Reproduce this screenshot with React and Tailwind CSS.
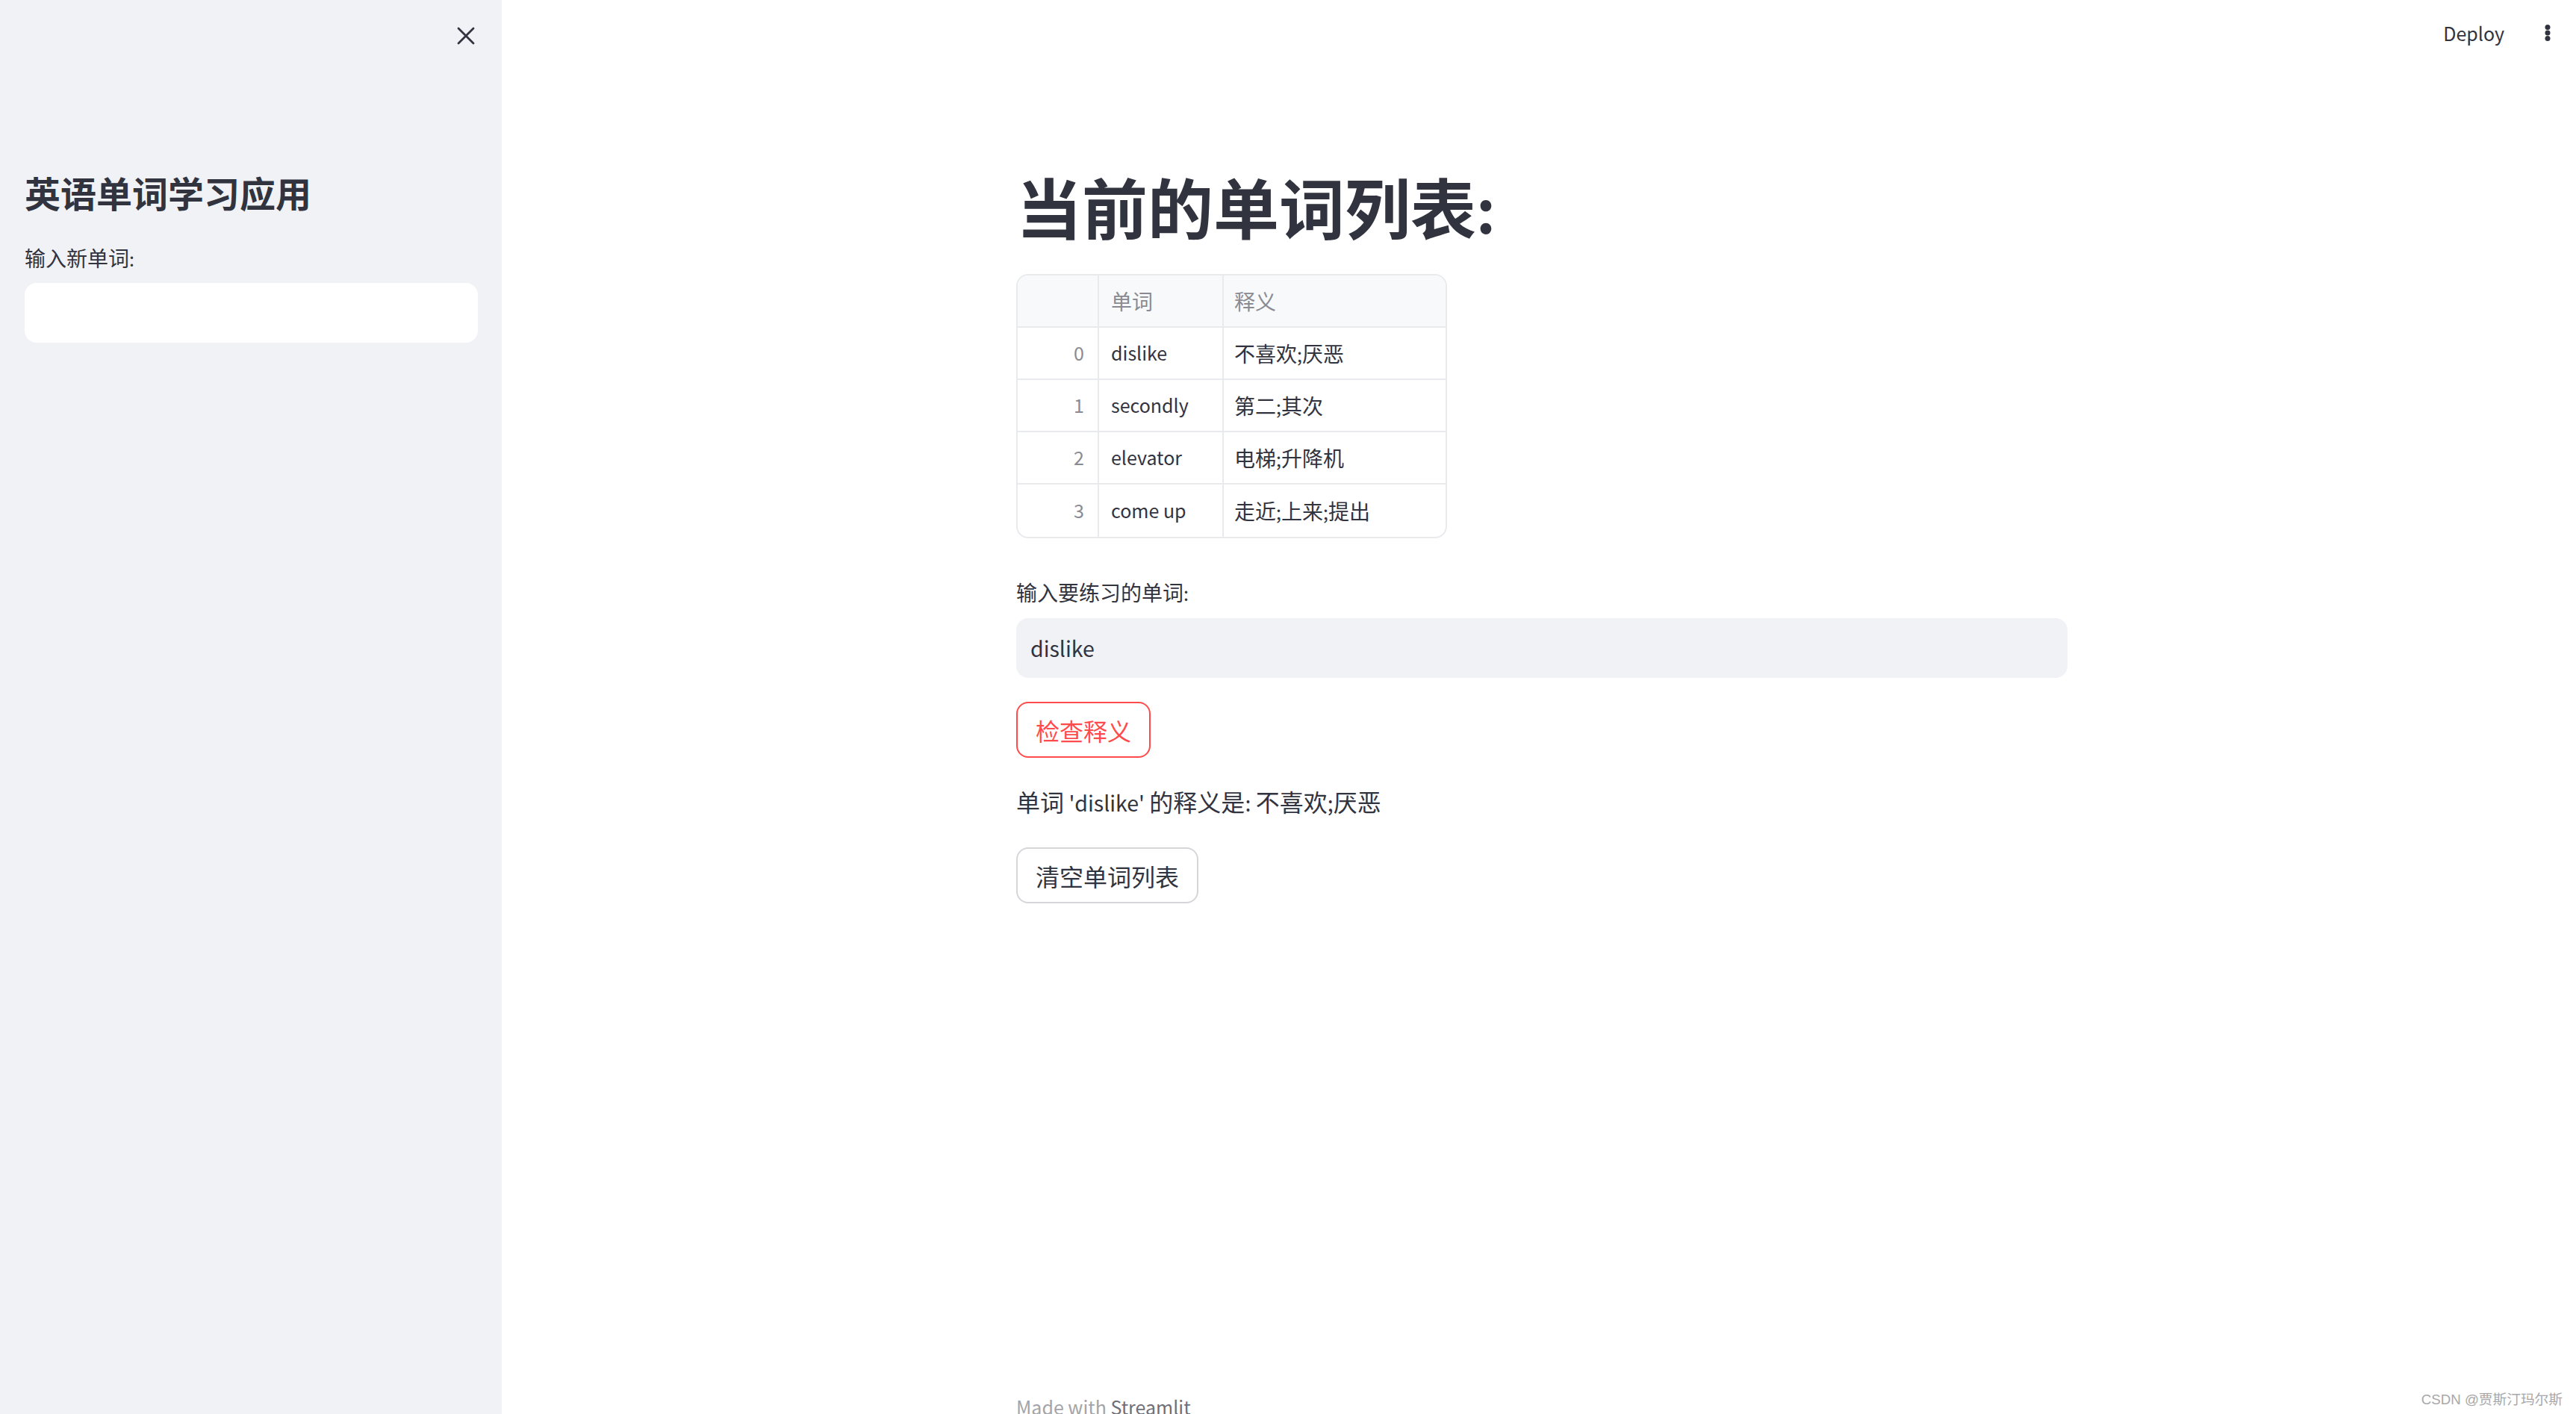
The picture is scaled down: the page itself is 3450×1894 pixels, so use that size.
import React from 'react';

const words = [
  { id: 0, word: 'dislike', meaning: '不喜欢;厌恶' },
  { id: 1, word: 'secondly', meaning: '第二;其次' },
  { id: 2, word: 'elevator', meaning: '电梯;升降机' },
  { id: 3, word: 'come up', meaning: '走近;上来;提出' },
];

// Latin glyphs of Noto Sans CJK run larger than Source Sans, so latin runs get a smaller size
function Mixed({ text, latin }) {
  const parts = text.split(/([\u3000-\u9fff\uff00-\uffef]+)/).filter(Boolean);
  return (
    <>
      {parts.map((p, i) =>
        /[\u3000-\u9fff\uff00-\uffef]/.test(p) ? (
          <span key={i}>{p}</span>
        ) : (
          <span key={i} className={latin}>{p}</span>
        )
      )}
    </>
  );
}

function CloseIcon() {
  return (
    <svg width="24" height="24" viewBox="0 0 24 24" fill="none">
      <path d="M2 2 L22 22 M22 2 L2 22" stroke="#31333f" strokeWidth="2.8" strokeLinecap="round" />
    </svg>
  );
}

function MenuDots() {
  return (
    <svg width="8" height="24" viewBox="0 0 8 24" fill="#31333f">
      <circle cx="4" cy="4.5" r="3.5" />
      <circle cx="4" cy="12" r="3.5" />
      <circle cx="4" cy="19.5" r="3.5" />
    </svg>
  );
}

export default function App() {
  return (
    <div className="relative flex h-[1894px] w-full overflow-hidden bg-white font-['Noto_Sans_CJK_SC','Noto_Sans',sans-serif] text-[#31333f]">
      {/* sidebar */}
      <aside className="flex w-[672px] shrink-0 flex-col bg-[#f0f2f6]">
        <div className="flex h-[96px] items-center justify-end pr-[36px]">
          <CloseIcon />
        </div>
        <div className="mt-[137px] px-[33px] pr-[32px]">
          <h1 className="text-[48px] font-bold leading-none">英语单词学习应用</h1>
          <label className="mt-[43px] block text-[28px] leading-[42px]">
            <Mixed text="输入新单词:" latin="text-[25px]" />
          </label>
          <div className="mt-[12px] h-[80px] rounded-[16px] bg-white" />
        </div>
      </aside>

      {/* main */}
      <main className="flex flex-1 flex-col">
        <header className="flex h-[92px] shrink-0 items-center justify-end pb-[4px] pr-[34px]">
          <span className="text-[25px] leading-none">Deploy</span>
          <span className="ml-[54px] flex items-center">
            <MenuDots />
          </span>
        </header>

        <div className="ml-[689px] w-[1408px]">
          <h1 className="mt-[139px] text-[88px] font-bold leading-none">
            <Mixed text="当前的单词列表:" latin="text-[80px]" />
          </h1>

          <div className="mt-[48px] w-[577px] overflow-hidden rounded-[16px] border-2 border-[#e8eaee] text-[28px]">
            <div className="grid h-[70px] grid-cols-[109px_167px_1fr] border-b-2 border-[#e8eaee] bg-[#f8f9fb] text-[#8a8b92]">
              <div className="border-r-2 border-[#e8eaee]" />
              <div className="flex items-center border-r-2 border-[#e8eaee] pl-[16px]">单词</div>
              <div className="flex items-center pl-[14px]">释义</div>
            </div>
            {words.map((w, i) => (
              <div
                key={w.id}
                className={`grid h-[70px] grid-cols-[109px_167px_1fr] ${i < words.length - 1 ? 'border-b-2 border-[#e8eaee]' : ''}`}
              >
                <div className="flex items-center justify-end border-r-2 border-[#e8eaee] pr-[18px] text-[25px] text-[#8a8b92]">{w.id}</div>
                <div className="flex items-center border-r-2 border-[#e8eaee] pl-[16px] text-[25px]">{w.word}</div>
                <div className="flex items-center pl-[14px]">
                  <span><Mixed text={w.meaning} latin="text-[25px]" /></span>
                </div>
              </div>
            ))}
          </div>

          <label className="mt-[51px] block text-[28px] leading-[42px]">
            <Mixed text="输入要练习的单词:" latin="text-[25px]" />
          </label>
          <div className="mt-[13px] flex h-[80px] items-center rounded-[16px] bg-[#f0f2f6] pl-[19px] text-[28.5px]">
            dislike
          </div>

          <button className="mt-[32px] flex h-[75px] items-center rounded-[16px] border-2 border-[#ff4b4b] bg-white px-[24px] text-[32px] text-[#ff4b4b]">
            检查释义
          </button>

          <p className="mt-[34px] text-[32px] leading-[48px]">
            <Mixed text="单词 'dislike' 的释义是: 不喜欢;厌恶" latin="text-[28.5px]" />
          </p>

          <button className="mt-[36px] flex h-[75px] items-center rounded-[16px] border-2 border-[#d5d6d9] bg-white px-[24px] text-[32px]">
            清空单词列表
          </button>
        </div>

        <footer className="ml-[689px] mt-auto h-[24px] overflow-hidden">
          <p className="text-[25px] leading-[28px] text-[#a3a4a9]">
            Made with <span className="text-[#6f7077]">Streamlit</span>
          </p>
        </footer>
      </main>

      <div className="absolute bottom-[9px] right-[18px] font-['Liberation_Sans','Noto_Sans_CJK_SC',sans-serif] text-[18.7px] leading-none text-[#a8a8a8] [text-shadow:0_0_2px_#ffffff]">
        CSDN @贾斯汀玛尔斯
      </div>
    </div>
  );
}
